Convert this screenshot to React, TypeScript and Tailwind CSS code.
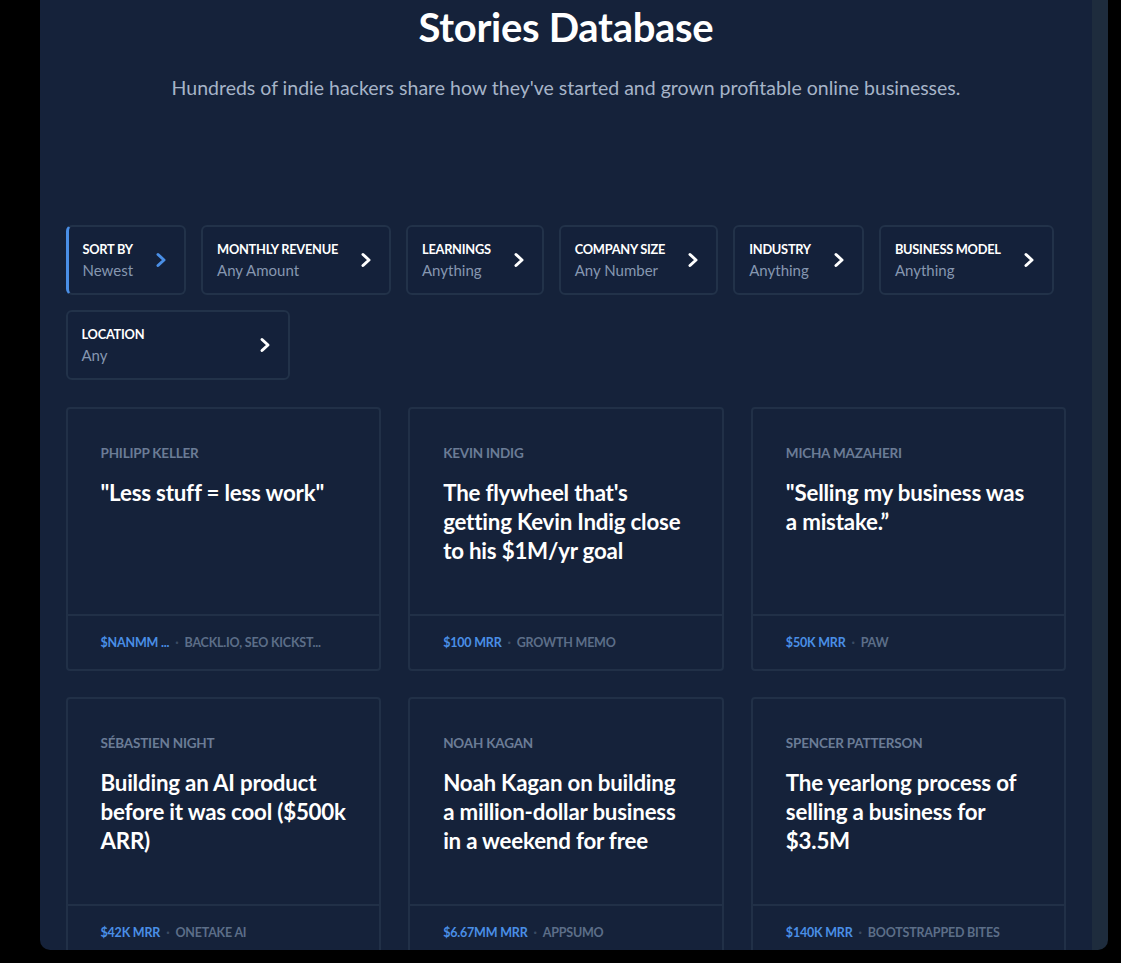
import React from "react";

const filters = [
  { label: "SORT BY", value: "Newest", active: true },
  { label: "MONTHLY REVENUE", value: "Any Amount" },
  { label: "LEARNINGS", value: "Anything" },
  { label: "COMPANY SIZE", value: "Any Number" },
  { label: "INDUSTRY", value: "Anything" },
  { label: "BUSINESS MODEL", value: "Anything" },
];

const stories = [
  { name: "Philipp Keller", title: "\"Less stuff = less work\"", rev: "$NaNMM ...", src: "BACKL.IO, SEO KICKST..." },
  { name: "Kevin Indig", title: "The flywheel that's getting Kevin Indig close to his $1M/yr goal", rev: "$100 MRR", src: "Growth Memo" },
  { name: "Micha Mazaheri", title: "\"Selling my business was a mistake.\u201d", rev: "$50K MRR", src: "PAW" },
  { name: "Sébastien Night", title: "Building an AI product before it was cool ($500k ARR)", rev: "$42K MRR", src: "OneTake AI" },
  { name: "Noah Kagan", title: "Noah Kagan on building a million-dollar business in a weekend for free", rev: "$6.67MM MRR", src: "AppSumo" },
  { name: "Spencer Patterson", title: "The yearlong process of selling a business for $3.5M", rev: "$140K MRR", src: "Bootstrapped Bites" },
];

function Chevron({ blue }: { blue?: boolean }) {
  return (
    <svg width="12" height="16" viewBox="0 0 12 16" className="shrink-0">
      <polyline
        points="3,2.5 9,8 3,13.5"
        fill="none"
        stroke={blue ? "#4a8fe6" : "#ffffff"}
        strokeWidth="3"
        strokeLinecap="round"
        strokeLinejoin="round"
      />
    </svg>
  );
}

function Filter({ label, value, active, wide }: { label: string; value: string; active?: boolean; wide?: boolean }) {
  return (
    <div
      className={
        "h-[70px] rounded-[6px] border-2 border-[#223249] bg-[#14213a] flex items-center justify-between gap-[22px] pr-[17px] pl-[14px] " +
        (active ? "border-l-[3px] border-l-[#4a8fe6]" : "") +
        (wide ? " w-[224px]" : "")
      }
    >
      <div className="flex flex-col">
        <span className="text-[12.8px] font-bold text-white leading-[20px] tracking-[-0.25px]">{label}</span>
        <span className="text-[15px] text-[#8697b0] leading-[22px]">{value}</span>
      </div>
      <Chevron blue={active} />
    </div>
  );
}

function Card({ s }: { s: (typeof stories)[number] }) {
  return (
    <div className="rounded-[4px] border-2 border-[#213047] flex flex-col">
      <div className="h-[205px] pl-[33px] pr-[31px] pt-[36px]">
        <div className="text-[13.5px] font-bold uppercase text-[#6b7c96] leading-[16px] tracking-[-0.2px]">{s.name}</div>
        <div className="mt-[17px] text-[22.3px] font-bold text-white leading-[29px] tracking-[-0.2px]">{s.title}</div>
      </div>
      <div className="h-[55px] border-t-2 border-[#213047] flex items-center pt-[2px] px-[33px] text-[12.5px] font-bold uppercase tracking-[-0.2px] whitespace-nowrap">
        <span className="text-[#4a8fe6]">{s.rev}</span>
        <span className="text-[#3a4b63] mx-[6px]">·</span>
        <span className="text-[#5c6e88]">{s.src}</span>
      </div>
    </div>
  );
}

export default function App() {
  return (
    <div className="w-[1121px] h-[963px] bg-black pl-[40px]" style={{ fontFamily: "Lato, 'Noto Sans', sans-serif" }}>
      <div className="w-[1068px] h-[950px] rounded-b-[10px] overflow-hidden flex">
        <div className="flex-1 bg-[#15223a] flex flex-col items-center">
          <h1 className="mt-[3px] text-[40px] font-bold text-white leading-[48px] tracking-[-0.3px]">Stories Database</h1>
          <p className="mt-[24px] text-[19.5px] text-[#a6b4c8] leading-[26px]">
            Hundreds of indie hackers share how they've started and grown profitable online businesses.
          </p>
          <div className="w-[1001px] mt-[124px]">
            <div className="flex flex-wrap gap-[15px]">
              {filters.map((f) => (
                <Filter key={f.label} {...f} />
              ))}
              <Filter label="LOCATION" value="Any" wide />
            </div>
            <div className="grid grid-cols-3 gap-x-[27px] gap-y-[26px] mt-[27px]">
              {stories.map((s) => (
                <Card key={s.name} s={s} />
              ))}
            </div>
          </div>
        </div>
        <div className="w-[16px] bg-[#1e2c3d]" />
      </div>
    </div>
  );
}
